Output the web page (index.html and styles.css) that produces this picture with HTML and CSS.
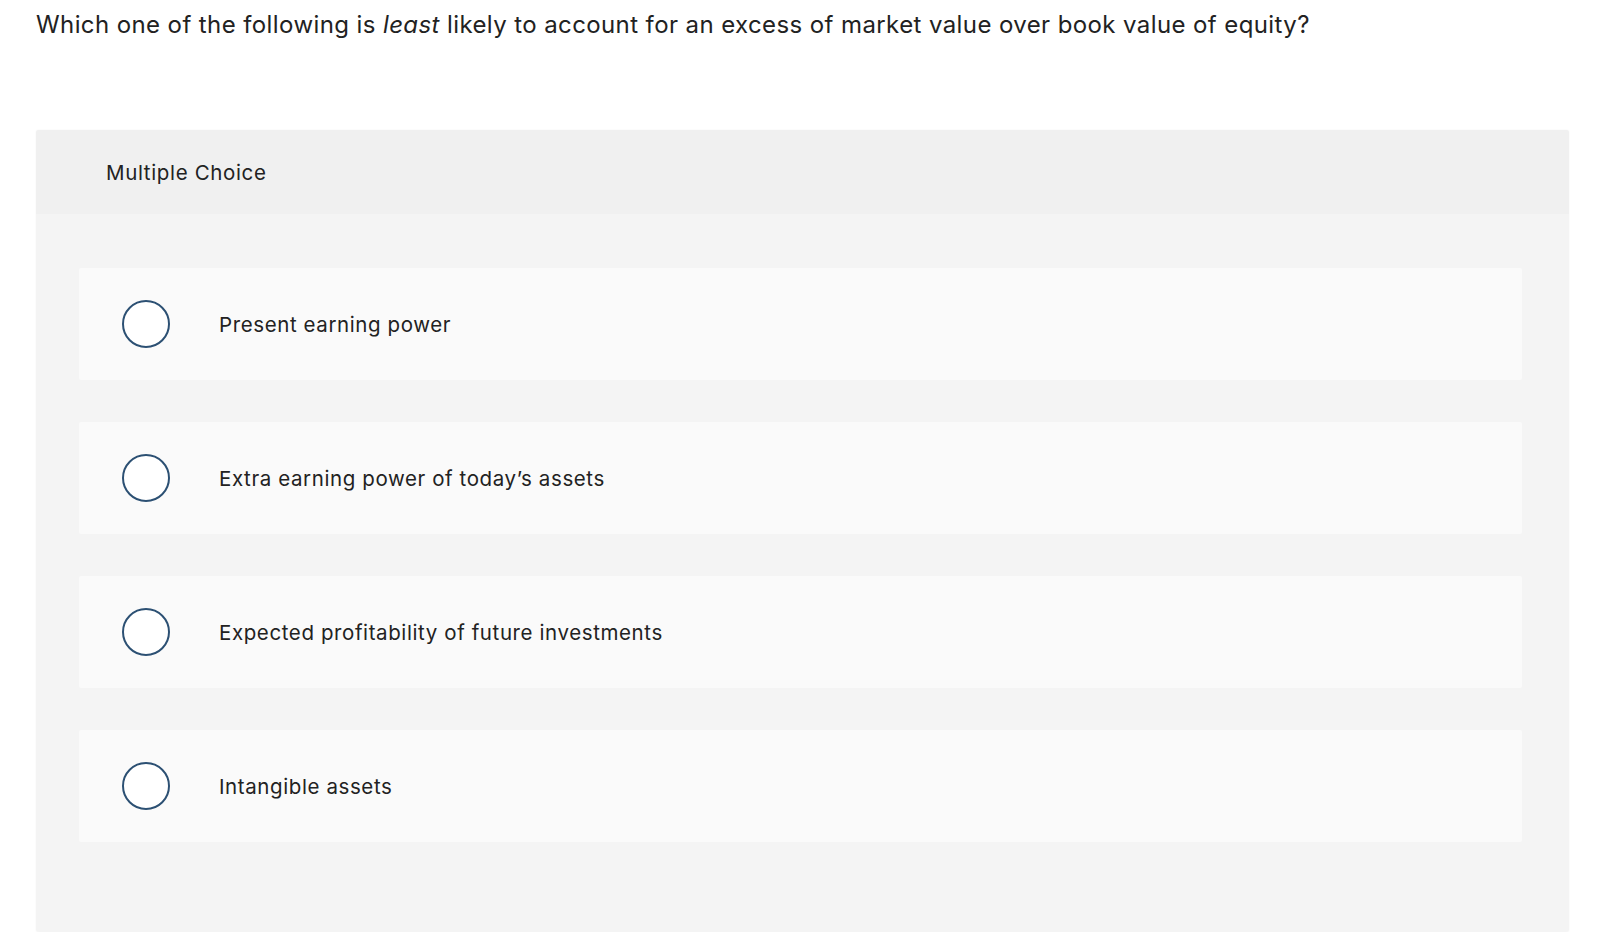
FILE: index.html
```html
<!DOCTYPE html>
<html>
<head>
<meta charset="utf-8">
<link rel="stylesheet" href="styles.css">
</head>
<body>
<div class="page">
  <p class="question">Which one of the following is <em>least</em> likely to account for an excess of market value over book value of equity?</p>
  <section class="panel">
    <header class="panel-head">Multiple Choice</header>
    <div class="panel-body">
      <div class="option"><span class="radio"></span><span class="label">Present earning power</span></div>
      <div class="option"><span class="radio"></span><span class="label">Extra earning power of today’s assets</span></div>
      <div class="option"><span class="radio"></span><span class="label">Expected profitability of future investments</span></div>
      <div class="option"><span class="radio"></span><span class="label">Intangible assets</span></div>
    </div>
  </section>
</div>
</body>
</html>
```

FILE: styles.css
```css
html, body {
  margin: 0;
  padding: 0;
  background: #ffffff;
}
.page {
  font-family: Inter, "Liberation Sans", sans-serif;
  color: #222222;
  padding: 0 31px 0 36px;
}
.question {
  margin: 0;
  padding-top: 10px;
  height: 130px;
  box-sizing: border-box;
  font-size: 24px;
  line-height: 30px;
  letter-spacing: 0.4px;
}
.question em {
  font-style: italic;
}
.panel {
  background: #f4f4f4;
  border-radius: 3px;
  box-shadow: 0 0 2px rgba(0,0,0,0.06);
  overflow: hidden;
}
.panel-head {
  background: #f0f0f0;
  height: 84px;
  display: flex;
  align-items: center;
  padding-left: 70px;
  font-size: 20.5px;
  letter-spacing: 0.65px;
}
.panel-body {
  padding: 54px 47px 90px 43px;
  display: flex;
  flex-direction: column;
  gap: 42px;
}
.option {
  background: #fafafa;
  height: 112px;
  border-radius: 2px;
  display: flex;
  align-items: center;
  padding-left: 43px;
}
.radio {
  width: 44px;
  height: 44px;
  border: 2px solid #2c5073;
  border-radius: 50%;
  background: #ffffff;
  flex: none;
}
.label {
  margin-left: 49px;
  padding-top: 1px;
  font-size: 20.5px;
  letter-spacing: 0.6px;
}
```
